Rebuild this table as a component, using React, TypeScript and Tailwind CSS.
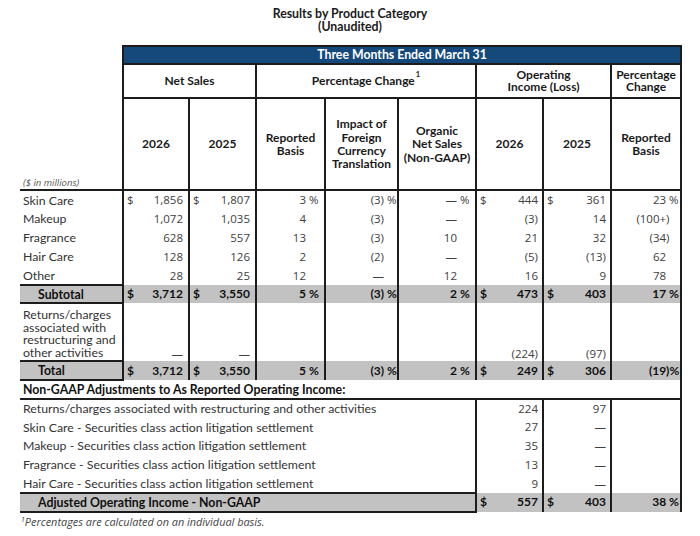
import React from 'react';

const font = "font-['Lato','Liberation_Sans',sans-serif]";
const numFont = "font-['Open_Sans','Liberation_Sans',sans-serif]";
const line = 'border-2 border-[#1c1c1c]';
const sufW = ['w-[5px]', 'w-[5px]', 'w-[18px]', 'w-[13px]', 'w-[18px]', 'w-[4px]', 'w-[4px]', 'w-[14px]'];

interface Val {
  v: string;
  d?: boolean;
  p?: boolean;
}

const V = (v: string, d = false, p = false): Val => ({ v, d, p });

const NumCell: React.FC<{ val?: Val; col: number; bold?: boolean; bottom?: boolean }> = ({ val, col, bold, bottom }) => {
  let main = val ? val.v : '';
  let suffix = '';
  if (val && col === 7 && main.endsWith(')')) {
    main = main.slice(0, -1);
    suffix = ')';
  }
  if (val && val.p) suffix += suffix ? '%' : ' %';
  return (
    <td
      className={`${line} border-y-0 px-0 ${bottom ? 'align-bottom' : 'align-middle'} ${
        bold ? `${font} font-bold text-[12px] text-[#111]` : `${numFont} text-[11.5px] text-[#404040]`
      }`}
    >
      <div className="flex items-end leading-[14px]">
        <span className="pl-[3px]">{val && val.d ? '$' : ''}</span>
        <span className="ml-auto whitespace-nowrap">{main}</span>
        <span className={`${sufW[col]} shrink-0 whitespace-pre`}>{suffix}</span>
      </div>
    </td>
  );
};

const categories: { name: string; vals: Val[] }[] = [
  { name: 'Skin Care', vals: [V('1,856', true), V('1,807', true), V('3', false, true), V('(3)', false, true), V('—', false, true), V('444', true), V('361', true), V('23', false, true)] },
  { name: 'Makeup', vals: [V('1,072'), V('1,035'), V('4'), V('(3)'), V('—'), V('(3)'), V('14'), V('(100+)')] },
  { name: 'Fragrance', vals: [V('628'), V('557'), V('13'), V('(3)'), V('10'), V('21'), V('32'), V('(34)')] },
  { name: 'Hair Care', vals: [V('128'), V('126'), V('2'), V('(2)'), V('—'), V('(5)'), V('(13)'), V('62')] },
  { name: 'Other', vals: [V('28'), V('25'), V('12'), V('—'), V('12'), V('16'), V('9'), V('78')] },
];

const subtotal: Val[] = [V('3,712', true), V('3,550', true), V('5', false, true), V('(3)', false, true), V('2', false, true), V('473', true), V('403', true), V('17', false, true)];
const total: Val[] = [V('3,712', true), V('3,550', true), V('5', false, true), V('(3)', false, true), V('2', false, true), V('249', true), V('306', true), V('(19)', false, true)];

const adjustments: { name: string; a: string; b: string }[] = [
  { name: 'Returns/charges associated with restructuring and other activities', a: '224', b: '97' },
  { name: 'Skin Care - Securities class action litigation settlement', a: '27', b: '—' },
  { name: 'Makeup - Securities class action litigation settlement', a: '35', b: '—' },
  { name: 'Fragrance - Securities class action litigation settlement', a: '13', b: '—' },
  { name: 'Hair Care - Securities class action litigation settlement', a: '9', b: '—' },
];

const head = `${line} font-bold text-[#1a1a1a] text-center align-middle text-[12px] leading-[13.4px]`;
const label = 'p-0 pl-[3px] text-[#333] leading-[13px]';

export default function App() {
  return (
    <div className={`w-[700px] h-[536px] bg-white ${font} text-[12.3px] overflow-hidden`}>
      <div className="pt-[7px] text-center font-bold text-[#1a1a1a] leading-[13px] text-[12.3px]">
        <div>Results by Product Category</div>
        <div>(Unaudited)</div>
      </div>

      <table className="ml-[20px] mt-[12px] w-[661px] table-fixed border-collapse">
        <colgroup>
          <col className="w-[103px]" />
          <col className="w-[66px]" />
          <col className="w-[67px]" />
          <col className="w-[69px]" />
          <col className="w-[73px]" />
          <col className="w-[78px]" />
          <col className="w-[67px]" />
          <col className="w-[68px]" />
          <col className="w-[70px]" />
        </colgroup>
        <tbody>
          <tr className="h-[18px]">
            <td className="p-0" />
            <td colSpan={8} className={`${line} bg-[#16497b] text-white font-bold text-center leading-[14px] p-0`}>
              Three Months Ended March 31
            </td>
          </tr>
          <tr className="h-[34px]">
            <td className="p-0" />
            <td colSpan={2} className={head}>Net Sales</td>
            <td colSpan={3} className={head}>
              Percentage Change<sup className="text-[7.5px] align-top relative top-[1px] ml-[1px]">1</sup>
            </td>
            <td colSpan={2} className={`${head} !leading-[12.5px]`}>Operating<br />Income (Loss)</td>
            <td className={`${head} !leading-[12.5px]`}>Percentage<br />Change</td>
          </tr>
          <tr className="h-[92px]">
            <td className={`border-b-2 border-[#1c1c1c] p-0 pl-[3px] pb-[1px] align-bottom italic text-[9.5px] text-[#555] leading-[11px] ${numFont}`}>
              ($ in millions)
            </td>
            <td className={head}>2026</td>
            <td className={head}>2025</td>
            <td className={head}>Reported<br />Basis</td>
            <td className={head}>Impact of<br />Foreign<br />Currency<br />Translation</td>
            <td className={head}>Organic<br />Net Sales<br />(Non-GAAP)</td>
            <td className={head}>2026</td>
            <td className={head}>2025</td>
            <td className={head}>Reported<br />Basis</td>
          </tr>

          {categories.map(c => (
            <tr key={c.name} className="h-[19px]">
              <td className={label}>{c.name}</td>
              {c.vals.map((v, i) => (
                <NumCell key={i} val={v} col={i} />
              ))}
            </tr>
          ))}

          <tr className="h-[18px] bg-[#c2c2c2]">
            <td className="border-y-2 border-[#1c1c1c] p-0 pl-[18px] font-bold text-[#111] leading-[13px]">Subtotal</td>
            {subtotal.map((v, i) => (
              <NumCell key={i} val={v} col={i} bold />
            ))}
          </tr>

          <tr className="h-[58px]">
            <td className="p-0 pl-[3px] pb-[1px] text-[#333] leading-[12.5px] align-bottom">
              Returns/charges associated with restructuring and other activities
            </td>
            <NumCell val={V('—')} col={0} bottom />
            <NumCell val={V('—')} col={1} bottom />
            <NumCell col={2} bottom />
            <NumCell col={3} bottom />
            <NumCell col={4} bottom />
            <NumCell val={V('(224)')} col={5} bottom />
            <NumCell val={V('(97)')} col={6} bottom />
            <NumCell col={7} bottom />
          </tr>

          <tr className="h-[19px] bg-[#c2c2c2]">
            <td className="border-y-2 border-[#1c1c1c] p-0 pl-[18px] font-bold text-[#111] leading-[13px]">Total</td>
            {total.map((v, i) => (
              <NumCell key={i} val={v} col={i} bold />
            ))}
          </tr>

          <tr className="h-[19px]">
            <td colSpan={9} className="border-r-2 border-b-2 border-[#1c1c1c] p-0 pl-[3px] font-bold text-[#111] leading-[13px]">
              Non-GAAP Adjustments to As Reported Operating Income:
            </td>
          </tr>

          {adjustments.map(a => (
            <tr key={a.name} className="h-[18.8px]">
              <td colSpan={6} className={`${label} whitespace-nowrap`}>{a.name}</td>
              <NumCell val={V(a.a)} col={5} />
              <NumCell val={V(a.b)} col={6} />
              <NumCell col={7} />
            </tr>
          ))}

          <tr className="h-[19px] bg-[#c2c2c2]">
            <td colSpan={6} className="border-y-2 border-[#1c1c1c] p-0 pl-[18px] font-bold text-[#111] leading-[13px]">
              Adjusted Operating Income - Non-GAAP
            </td>
            <NumCell val={V('557', true)} col={5} bold />
            <NumCell val={V('403', true)} col={6} bold />
            <NumCell val={V('38', false, true)} col={7} bold />
          </tr>
        </tbody>
      </table>

      <div className={`ml-[21px] mt-[2px] italic text-[10.9px] text-[#444] leading-[13px] ${numFont}`}>
        <sup className="text-[7px]">1</sup>Percentages are calculated on an individual basis.
      </div>
    </div>
  );
}
